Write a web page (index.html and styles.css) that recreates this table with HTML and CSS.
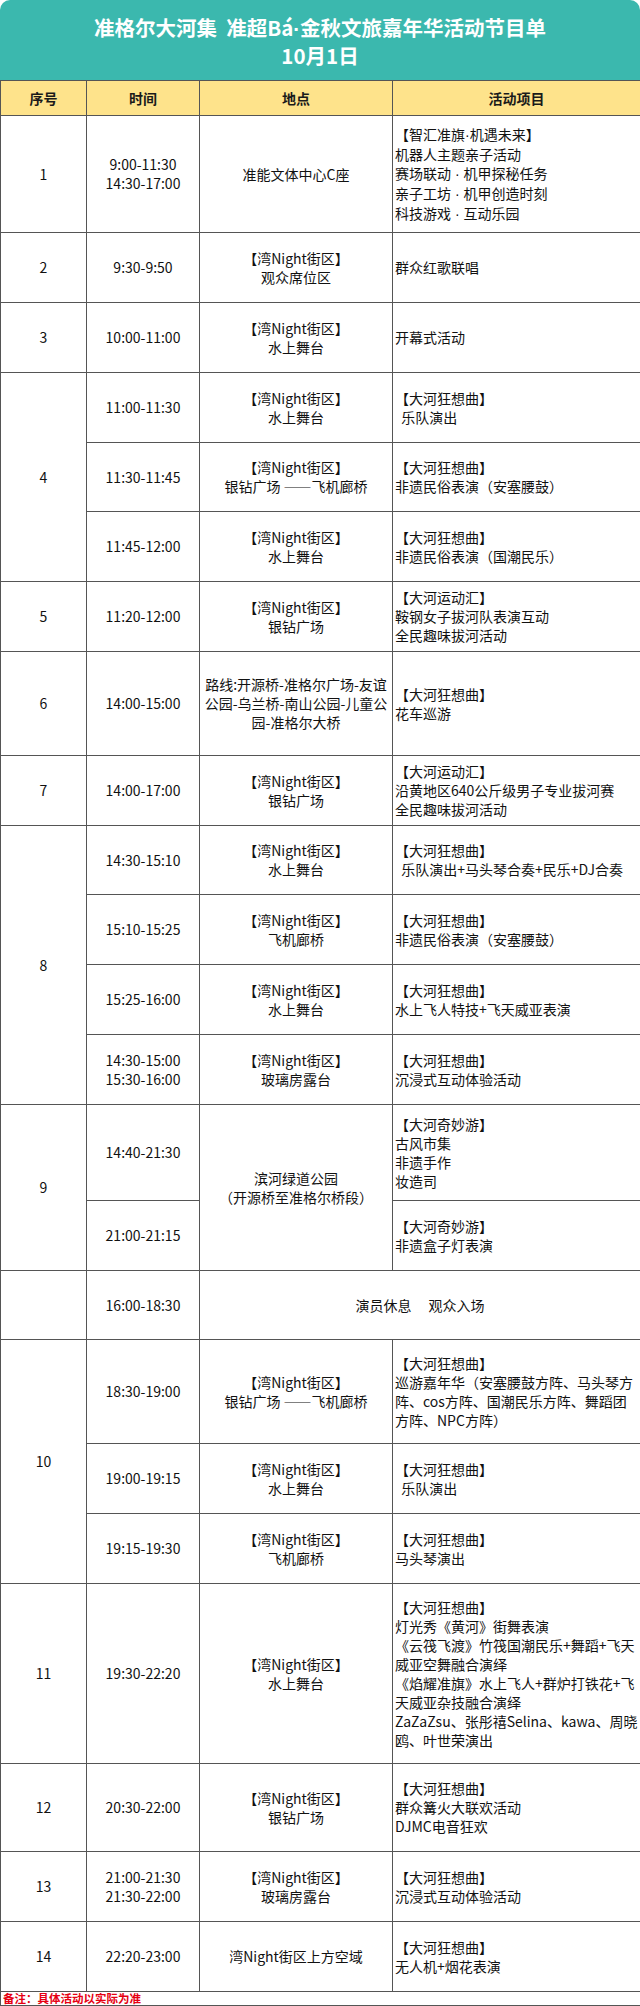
FILE: index.html
```html
<!DOCTYPE html>
<html lang="zh-CN">
<head>
<meta charset="utf-8">
<title>准格尔大河集 活动节目单</title>
<link rel="stylesheet" href="styles.css">
</head>
<body>
<div class="sheet">
  <header class="banner">
    <h1 class="title">准格尔大河集&nbsp;&nbsp;准超Bá<span class="dot">·</span>金秋文旅嘉年华活动节目单<br>10月1日</h1>
  </header>
  <table class="schedule">
    <colgroup>
      <col class="c-no"><col class="c-time"><col class="c-place"><col class="c-act">
    </colgroup>
    <thead>
      <tr class="h35 head-row">
        <th>序号</th><th>时间</th><th>地点</th><th>活动项目</th>
      </tr>
    </thead>
    <tbody>
      <tr class="h117">
        <td class="no">1</td>
        <td class="ctr">9:00-11:30<br>14:30-17:00</td>
        <td class="ctr">准能文体中心C座</td>
        <td class="act">【智汇准旗<span class="dot">·</span>机遇未来】<br>机器人主题亲子活动<br>赛场联动<span class="dot"> · </span>机甲探秘任务<br>亲子工坊<span class="dot"> · </span>机甲创造时刻<br>科技游戏<span class="dot"> · </span>互动乐园</td>
      </tr>
      <tr class="h70">
        <td class="no">2</td>
        <td class="ctr">9:30-9:50</td>
        <td class="ctr">【湾Night街区】<br>观众席位区</td>
        <td class="act">群众红歌联唱</td>
      </tr>
      <tr class="h70">
        <td class="no">3</td>
        <td class="ctr">10:00-11:00</td>
        <td class="ctr">【湾Night街区】<br>水上舞台</td>
        <td class="act">开幕式活动</td>
      </tr>
      <tr class="h70">
        <td class="no" rowspan="3">4</td>
        <td class="ctr">11:00-11:30</td>
        <td class="ctr">【湾Night街区】<br>水上舞台</td>
        <td class="act">【大河狂想曲】<br>&nbsp;&nbsp;乐队演出</td>
      </tr>
      <tr class="h69">
        <td class="ctr">11:30-11:45</td>
        <td class="ctr">【湾Night街区】<br>银钻广场 ——飞机廊桥</td>
        <td class="act">【大河狂想曲】<br>非遗民俗表演（安塞腰鼓）</td>
      </tr>
      <tr class="h70">
        <td class="ctr">11:45-12:00</td>
        <td class="ctr">【湾Night街区】<br>水上舞台</td>
        <td class="act">【大河狂想曲】<br>非遗民俗表演（国潮民乐）</td>
      </tr>
      <tr class="h70">
        <td class="no">5</td>
        <td class="ctr">11:20-12:00</td>
        <td class="ctr">【湾Night街区】<br>银钻广场</td>
        <td class="act">【大河运动汇】<br>鞍钢女子拔河队表演互动<br>全民趣味拔河活动</td>
      </tr>
      <tr class="h104">
        <td class="no">6</td>
        <td class="ctr">14:00-15:00</td>
        <td class="ctr">路线:开源桥-准格尔广场-友谊<br>公园-乌兰桥-南山公园-儿童公<br>园-准格尔大桥</td>
        <td class="act">【大河狂想曲】<br>花车巡游</td>
      </tr>
      <tr class="h70">
        <td class="no">7</td>
        <td class="ctr">14:00-17:00</td>
        <td class="ctr">【湾Night街区】<br>银钻广场</td>
        <td class="act">【大河运动汇】<br>沿黄地区640公斤级男子专业拔河赛<br>全民趣味拔河活动</td>
      </tr>
      <tr class="h69">
        <td class="no" rowspan="4">8</td>
        <td class="ctr">14:30-15:10</td>
        <td class="ctr">【湾Night街区】<br>水上舞台</td>
        <td class="act">【大河狂想曲】<br>&nbsp;&nbsp;乐队演出+马头琴合奏+民乐+DJ合奏</td>
      </tr>
      <tr class="h70">
        <td class="ctr">15:10-15:25</td>
        <td class="ctr">【湾Night街区】<br>飞机廊桥</td>
        <td class="act">【大河狂想曲】<br>非遗民俗表演（安塞腰鼓）</td>
      </tr>
      <tr class="h70">
        <td class="ctr">15:25-16:00</td>
        <td class="ctr">【湾Night街区】<br>水上舞台</td>
        <td class="act">【大河狂想曲】<br>水上飞人特技+飞天威亚表演</td>
      </tr>
      <tr class="h70">
        <td class="ctr">14:30-15:00<br>15:30-16:00</td>
        <td class="ctr">【湾Night街区】<br>玻璃房露台</td>
        <td class="act">【大河狂想曲】<br>沉浸式互动体验活动</td>
      </tr>
      <tr class="h96">
        <td class="no" rowspan="2">9</td>
        <td class="ctr">14:40-21:30</td>
        <td class="ctr" rowspan="2">滨河绿道公园<br>（开源桥至准格尔桥段）</td>
        <td class="act">【大河奇妙游】<br>古风市集<br>非遗手作<br>妆造司</td>
      </tr>
      <tr class="h70">
        <td class="ctr">21:00-21:15</td>
        <td class="act">【大河奇妙游】<br>非遗盒子灯表演</td>
      </tr>
      <tr class="h69">
        <td class="no"></td>
        <td class="ctr">16:00-18:30</td>
        <td class="ctr" colspan="2">演员休息　&nbsp;观众入场</td>
      </tr>
      <tr class="h104">
        <td class="no" rowspan="3">10</td>
        <td class="ctr">18:30-19:00</td>
        <td class="ctr">【湾Night街区】<br>银钻广场 ——飞机廊桥</td>
        <td class="act">【大河狂想曲】<br>巡游嘉年华（安塞腰鼓方阵、马头琴方<br>阵、cos方阵、国潮民乐方阵、舞蹈团<br>方阵、NPC方阵）</td>
      </tr>
      <tr class="h70">
        <td class="ctr">19:00-19:15</td>
        <td class="ctr">【湾Night街区】<br>水上舞台</td>
        <td class="act">【大河狂想曲】<br>&nbsp;&nbsp;乐队演出</td>
      </tr>
      <tr class="h70">
        <td class="ctr">19:15-19:30</td>
        <td class="ctr">【湾Night街区】<br>飞机廊桥</td>
        <td class="act">【大河狂想曲】<br>马头琴演出</td>
      </tr>
      <tr class="h180">
        <td class="no">11</td>
        <td class="ctr">19:30-22:20</td>
        <td class="ctr">【湾Night街区】<br>水上舞台</td>
        <td class="act">【大河狂想曲】<br>灯光秀《黄河》街舞表演<br>《云筏飞渡》竹筏国潮民乐+舞蹈+飞天<br>威亚空舞融合演绎<br>《焰耀准旗》水上飞人+群炉打铁花+飞<br>天威亚杂技融合演绎<br>ZaZaZsu、张彤禧Selina、kawa、周晓<br>鸥、叶世荣演出</td>
      </tr>
      <tr class="h88">
        <td class="no">12</td>
        <td class="ctr">20:30-22:00</td>
        <td class="ctr">【湾Night街区】<br>银钻广场</td>
        <td class="act">【大河狂想曲】<br>群众篝火大联欢活动<br>DJMC电音狂欢</td>
      </tr>
      <tr class="h70">
        <td class="no">13</td>
        <td class="ctr">21:00-21:30<br>21:30-22:00</td>
        <td class="ctr">【湾Night街区】<br>玻璃房露台</td>
        <td class="act">【大河狂想曲】<br>沉浸式互动体验活动</td>
      </tr>
      <tr class="h70">
        <td class="no">14</td>
        <td class="ctr">22:20-23:00</td>
        <td class="ctr">湾Night街区上方空域</td>
        <td class="act">【大河狂想曲】<br>无人机+烟花表演</td>
      </tr>
      <tr class="h14">
        <td class="note" colspan="4">备注：具体活动以实际为准</td>
      </tr>
    </tbody>
  </table>
</div>
</body>
</html>
```
FILE: styles.css
```css
html, body {
  margin: 0;
  padding: 0;
  background: #ffffff;
}

.sheet {
  width: 640px;
  font-family: "Noto Sans CJK SC", sans-serif;
  color: #111111;
}

.banner {
  height: 80px;
  background: #3bb8ae;
  border-radius: 10px 10px 0 0;
  box-sizing: border-box;
  padding-top: 14px;
}

.title {
  margin: 0;
  text-align: center;
  color: #ffffff;
  font-size: 20.5px;
  font-weight: 700;
  line-height: 27px;
}

.dot {
  font-family: "Liberation Sans", sans-serif;
}

.schedule {
  width: 640px;
  border-collapse: collapse;
  table-layout: fixed;
  font-size: 14px;
  line-height: 19px;
}

.c-no { width: 86px; }
.c-time { width: 113px; }
.c-place { width: 193px; }
.c-act { width: 248px; }

.schedule th,
.schedule td {
  border: 1px solid #555555;
  padding: 0 2px;
  vertical-align: middle;
  white-space: nowrap;
  overflow: visible;
}

.head-row th {
  background: #fee38b;
  font-weight: 700;
  font-size: 14px;
  text-align: center;
  color: #1a1a1a;
}

.no,
.ctr {
  text-align: center;
}

.act {
  text-align: left;
  padding-left: 3px;
}

.note {
  color: #e60012;
  font-weight: 700;
  font-size: 11.5px;
  line-height: 13px;
  padding: 0 3px;
  text-align: left;
}

.h14 { height: 14px; }
.h35 { height: 35px; }
.h69 { height: 69px; }
.h70 { height: 70px; }
.h88 { height: 88px; }
.h96 { height: 96px; }
.h104 { height: 104px; }
.h117 { height: 117px; }
.h180 { height: 180px; }
```
